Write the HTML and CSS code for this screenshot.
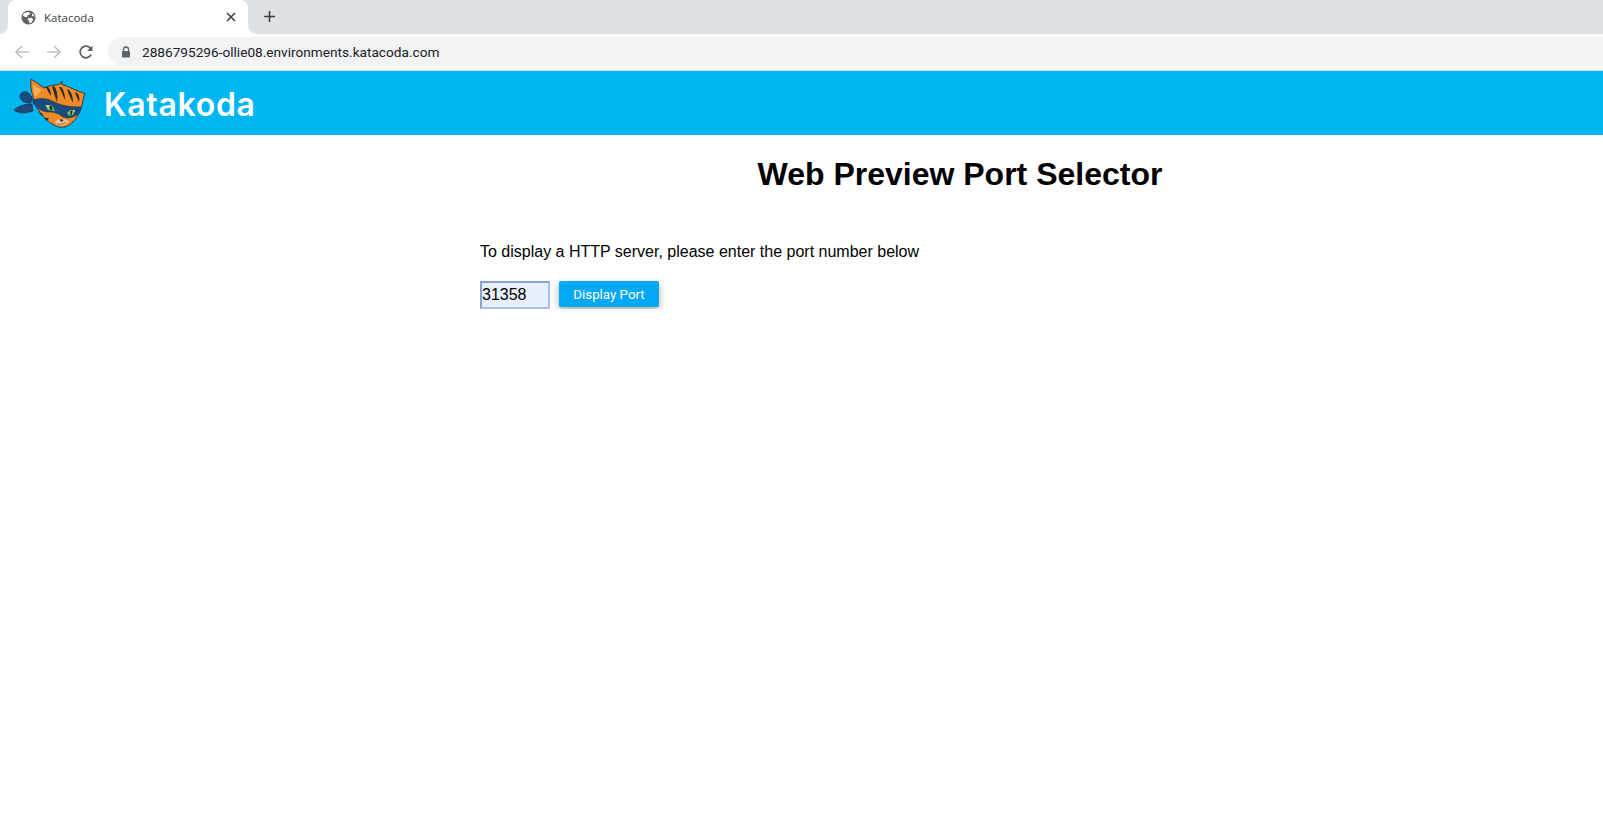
FILE: index.html
```html
<!DOCTYPE html>
<html lang="en">
<head>
  <meta charset="UTF-8" />
  <title>Katacoda</title>
  <link rel="stylesheet" href="styles.css">
</head>
<body>

<div class="tabstrip">
  <div class="tab">
    <svg class="tab-icon" viewBox="0 0 16 16">
      <circle cx="8" cy="8" r="7.5" fill="#5f6368"/>
      <path d="M3 3.5 L7 2 L9.5 3 L9 5 L7 5.5 L6.5 7.5 L4.5 7.5 L2 6 Z" fill="#fff"/>
      <path d="M8 8.5 L11.5 8.5 L13 10 L11 13.5 L9 14 L8.5 11.5 L7 10 Z" fill="#fff"/>
      <path d="M11.5 3 L14 5.5 L14.5 7 L12 6.5 Z" fill="#fff"/>
    </svg>
    <span class="tab-title">Katacoda</span>
    <svg class="tab-close" viewBox="0 0 10 10">
      <path d="M1 1 L9 9 M9 1 L1 9" stroke="#3c4043" stroke-width="1.6" fill="none"/>
    </svg>
  </div>
  <svg class="new-tab" viewBox="0 0 14 14">
    <path d="M7 1 V13 M1 7 H13" stroke="#3c4043" stroke-width="1.7" fill="none"/>
  </svg>
</div>

<div class="toolbar">
  <svg class="nav-icon" viewBox="0 0 16 16">
    <path d="M15 8 H2 M8 2 L2 8 L8 14" stroke="#bdc1c6" stroke-width="1.7" fill="none"/>
  </svg>
  <svg class="nav-icon" viewBox="0 0 16 16">
    <path d="M1 8 H14 M8 2 L14 8 L8 14" stroke="#bdc1c6" stroke-width="1.7" fill="none"/>
  </svg>
  <svg class="nav-icon" viewBox="0 0 16 16">
    <path d="M13.2 10.5 A5.8 5.8 0 1 1 12.6 4.4" stroke="#5f6368" stroke-width="1.8" fill="none"/>
    <path d="M14.5 1.5 V7 H9 Z" fill="#5f6368"/>
  </svg>
  <div class="omnibox">
    <svg class="lock" viewBox="0 0 10 12">
      <path d="M2.5 5 V3.5 A2.5 2.5 0 0 1 7.5 3.5 V5" stroke="#5f6368" stroke-width="1.3" fill="none"/>
      <rect x="1" y="5" width="8" height="6.5" rx="1" fill="#5f6368"/>
    </svg>
    <span class="url">2886795296-ollie08.environments.katacoda.com</span>
  </div>
</div>

<header class="site-header">
  <svg class="cat" viewBox="0 71 90 64">
    <!-- bandana tails and knot -->
    <path d="M32 104 C26 104 20 105 14 110 C18 113 24 114 33 111 Z" fill="#1d4a7c" stroke="#10263f" stroke-width="0.7"/>
    <path d="M30 95 C27 90 21 91 20 96 C20 100 24 103 30 103 C33 102 33 97 30 95 Z" fill="#1d4a7c" stroke="#10263f" stroke-width="0.7"/>
    <!-- head -->
    <path d="M31 79 C36 82 40 85 44 88 C50 85 56 85 60 84 L62 81 L62 84.5 C68 86 76 91 85 93.5 C83 98 83 103 81 108 C79 116 73 124 65 127 C58 128 52 125 46 119 C41 114 36 108 34 101 C32 94 30 86 31 79 Z" fill="#f08a24" stroke="#1b2230" stroke-width="0.8"/>
    <path d="M33 84 C36 87 39 89 42 90 C39 92 37 95 36 98 C34 94 33 89 33 84 Z" fill="#f7ab5e"/>
    <!-- stripes -->
    <path d="M48 87 C50 89 51 92 51 96 C49 93 47 90 46 87 Z" fill="#2b2a2e"/>
    <path d="M54 86 C57 90 58 96 57 102 C55 97 54 92 52 87 Z" fill="#2b2a2e"/>
    <path d="M61 87 C64 90 65 95 65 100 C63 96 62 92 59 87 Z" fill="#2b2a2e"/>
    <path d="M69 90 C72 93 73 98 73 103 C71 99 69 95 67 89 Z" fill="#2b2a2e"/>
    <path d="M77 93 C79 95 80 98 79 102 C78 99 76 96 75 92 Z" fill="#2b2a2e"/>
    <path d="M38 112 L43 114 L42 116 Z M44 118 L49 118 L47 121 Z" fill="#2b2a2e"/>
    <!-- mask -->
    <path d="M33 100 C40 98 46 98 52 101 C58 104 66 107 81 107 C81 110 79 113 77 115 C72 118 67 119 63 117 C58 113 54 112 48 112 C42 112 37 108 33 103 Z" fill="#1d4a7c" stroke="#12304f" stroke-width="0.5"/>
    <!-- eyes -->
    <path d="M45 105 L52 105.5 L55 111 L48 110 Z" fill="#7cc552"/>
    <path d="M67 113 L70 110.5 L75 110 L73 115 L69 115.5 Z" fill="#7cc552"/>
    <path d="M49.5 106 L51.5 106 L52.5 110 L50.5 110 Z M70.5 111 L72.5 111 L71.5 115 L70.500 115 Z" fill="#15202b"/>
    <path d="M46 105.5 L49 105.5 L48.5 107 Z M73 110.5 L75 110.5 L74 112 Z" fill="#fff"/>
    <!-- muzzle -->
    <path d="M55 122 C57 119 60 118 63 119 C66 119 68 120 69 122 C66 125 60 127 57 125 Z" fill="#f5c18f"/>
    <path d="M59.5 119 L64 120 L61 122 Z" fill="#26242a"/>
    <path d="M57 124 C60 125 63 124 66 122" stroke="#26242a" stroke-width="0.6" fill="none"/>
  </svg>
  <span class="brand">Katakoda</span>
</header>

<main class="page">
  <h1>Web Preview Port Selector</h1>
  <p class="hint">To display a HTTP server, please enter the port number below</p>
  <form class="port-form">
    <input class="port-input" type="text" value="31358">
    <button type="button" class="btn">Display Port</button>
  </form>
</main>

</body>
</html>
```

FILE: styles.css
```css
* { box-sizing: border-box; }
body {
  margin: 0;
  font-family: 'Liberation Sans', Arial, sans-serif;
  background: #fff;
  color: #000;
}

/* browser chrome */
.tabstrip {
  height: 34px;
  background: #dee1e6;
  display: flex;
  align-items: flex-end;
  padding-left: 8px;
}
.tab {
  position: relative;
  width: 240px;
  height: 34px;
  background: #fff;
  border-radius: 8px 8px 0 0;
  display: flex;
  align-items: center;
  padding: 0 11px 0 13px;
}
.tab::before,
.tab::after {
  content: "";
  position: absolute;
  bottom: 0;
  width: 8px;
  height: 8px;
}
.tab::before {
  left: -8px;
  background: radial-gradient(circle at 0 0, #dee1e6 7.5px, #fff 8px);
}
.tab::after {
  right: -8px;
  background: radial-gradient(circle at 100% 0, #dee1e6 7.5px, #fff 8px);
}
.tab-icon { width: 15px; height: 15px; }
.tab-title {
  margin-left: 8px;
  flex: 1;
  font-family: 'Open Sans', sans-serif;
  font-size: 11.5px;
  color: #3c4043;
}
.tab-close { width: 10px; height: 10px; margin-right: 1px; }
.new-tab { width: 13px; height: 13px; margin: 0 0 11px 15px; }
.toolbar {
  height: 37px;
  display: flex;
  align-items: center;
  padding: 0 0 1px 14px;
  background: #fff;
  border-bottom: 1px solid #dadce0;
}
.nav-icon { width: 16px; height: 16px; margin-right: 16px; }
.nav-icon:nth-child(3) { margin-right: 14px; }
.omnibox {
  flex: 1;
  height: 29px;
  background: #f1f3f4;
  border-radius: 15px 0 0 15px;
  display: flex;
  align-items: center;
  padding-left: 13px;
}
.lock { width: 10px; height: 12px; }
.url {
  margin-left: 11px;
  font-family: 'Roboto', sans-serif;
  font-size: 13.65px;
  color: #202124;
}

/* site */
.site-header {
  height: 64px;
  background: #00b6f1;
  display: flex;
  align-items: center;
}
.cat { width: 90px; height: 64px; flex: none; }
.brand {
  margin-left: 14px;
  padding-top: 3px;
  font-family: 'Inter', sans-serif;
  font-size: 32px;
  font-weight: 600;
  letter-spacing: 0.7px;
  color: #fff;
}
.page {
  width: 960px;
  margin-left: 480px;
}
h1 {
  margin: 21px 0 0;
  text-align: center;
  font-size: 32px;
  line-height: 36px;
  font-weight: bold;
}
.hint {
  margin: 51px 0 0;
  font-size: 16px;
  line-height: 18px;
}
.port-form {
  display: flex;
  align-items: flex-start;
  gap: 9px;
  margin-top: 20px;
}
.port-input {
  width: 70px;
  height: 28px;
  padding: 0;
  border: 2px solid #a6c0ee;
  border-top-color: #8aa3d0;
  border-left-color: #8aa3d0;
  background: #e8f0fe;
  font-family: 'Liberation Sans', Arial, sans-serif;
  font-size: 16px;
  color: #000;
  outline: none;
}
.btn {
  width: 100px;
  height: 26px;
  padding-bottom: 1px;
  background: #03a9f4;
  color: #fff;
  border: none;
  border-radius: 2px;
  font-family: 'Roboto', sans-serif;
  font-size: 13.3px;
  font-weight: 400;
  box-shadow: 0 3px 7px rgba(0, 0, 0, 0.35);
  cursor: pointer;
}
```
